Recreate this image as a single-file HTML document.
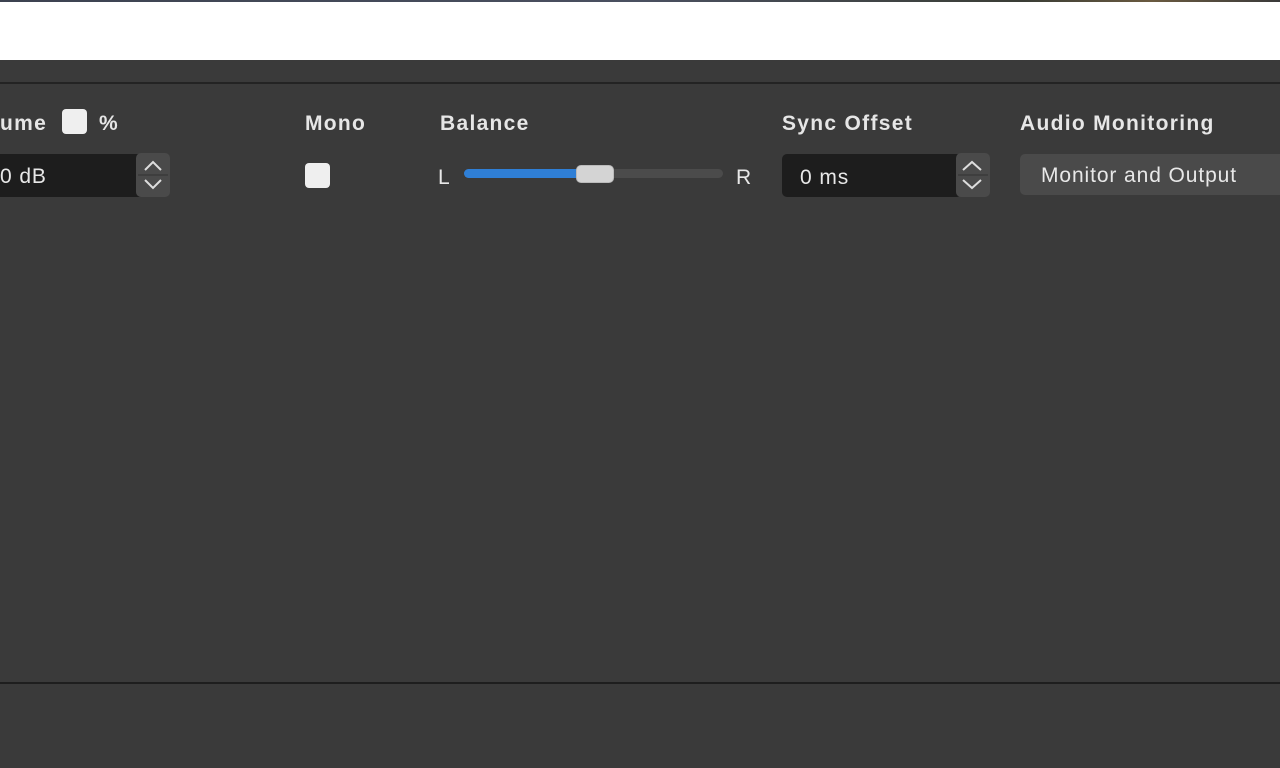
<!DOCTYPE html>
<html><head><meta charset="utf-8"><style>
*{margin:0;padding:0;box-sizing:border-box}
body{width:1280px;height:768px;overflow:hidden;background:#3a3a3a;font-family:"Liberation Sans",sans-serif;position:relative;color:#e8e8e8}
.a{position:absolute}
.lbl{font-weight:bold;font-size:21px;top:112px;color:#e6e6e6;letter-spacing:1.3px}
.box{background:#1d1d1d;border-radius:5px}
.spin{background:#4a4a4a;border-radius:5px;width:34px;height:44px}
.txt{font-size:21px;color:#e8e8e8;letter-spacing:0.9px}
.chk{background:#efefef;border-radius:4px;width:25px;height:25px}
</style></head><body>
<div class="a" style="top:0;left:0;width:1280px;height:2px;background:linear-gradient(90deg,#3c4250,#4a5060 50%,#3a3d35 80%,#6a5a40 90%,#3a3a3a)"></div>
<div class="a" style="top:2px;left:0;width:1280px;height:58px;background:#fff"></div>
<div class="a" style="top:82px;left:0;width:1280px;height:2px;background:#232323"></div>
<div class="a" style="top:682px;left:0;width:1280px;height:2px;background:#1e1e1e"></div>

<div class="a lbl" style="left:0">ume</div>
<div class="a chk" style="left:62px;top:109px"></div>
<div class="a lbl" style="left:99px">%</div>
<div class="a box" style="left:-6px;top:154px;width:150px;height:43px"></div>
<div class="a txt" style="left:0;top:165px">0 dB</div>
<div class="a spin" style="left:136px;top:153px"></div>
<svg class="a" style="left:136px;top:153px" width="34" height="44"><path d="M9 17 L17 9 L25 17 M9 27 L17 35 L25 27" stroke="#ddd" stroke-width="2" fill="none"/><line x1="2" y1="22" x2="32" y2="22" stroke="#333" stroke-width="1"/></svg>

<div class="a lbl" style="left:305px">Mono</div>
<div class="a chk" style="left:305px;top:163px"></div>

<div class="a lbl" style="left:440px">Balance</div>
<div class="a txt" style="left:438px;top:166px">L</div>
<div class="a" style="left:464px;top:169px;width:259px;height:9px;background:#4b4b4b;border-radius:5px"></div>
<div class="a" style="left:464px;top:169px;width:120px;height:9px;background:#2f7fd6;border-radius:5px"></div>
<div class="a" style="left:576px;top:165px;width:38px;height:18px;background:#d4d4d4;border-radius:5px;border:1px solid #bbb"></div>
<div class="a txt" style="left:736px;top:166px">R</div>

<div class="a lbl" style="left:782px">Sync Offset</div>
<div class="a box" style="left:782px;top:154px;width:180px;height:43px"></div>
<div class="a txt" style="left:800px;top:166px">0 ms</div>
<div class="a spin" style="left:956px;top:153px"></div>
<svg class="a" style="left:956px;top:153px" width="34" height="44"><path d="M7 17 L16 9 L25 17 M7 27 L16 35 L25 27" stroke="#ddd" stroke-width="2" fill="none"/><line x1="2" y1="22" x2="32" y2="22" stroke="#333" stroke-width="1"/></svg>

<div class="a lbl" style="left:1020px">Audio Monitoring</div>
<div class="a" style="left:1020px;top:154px;width:280px;height:41px;background:#4a4a4a;border-radius:5px"></div>
<div class="a txt" style="left:1041px;top:164px">Monitor and Output</div>
</body></html>
